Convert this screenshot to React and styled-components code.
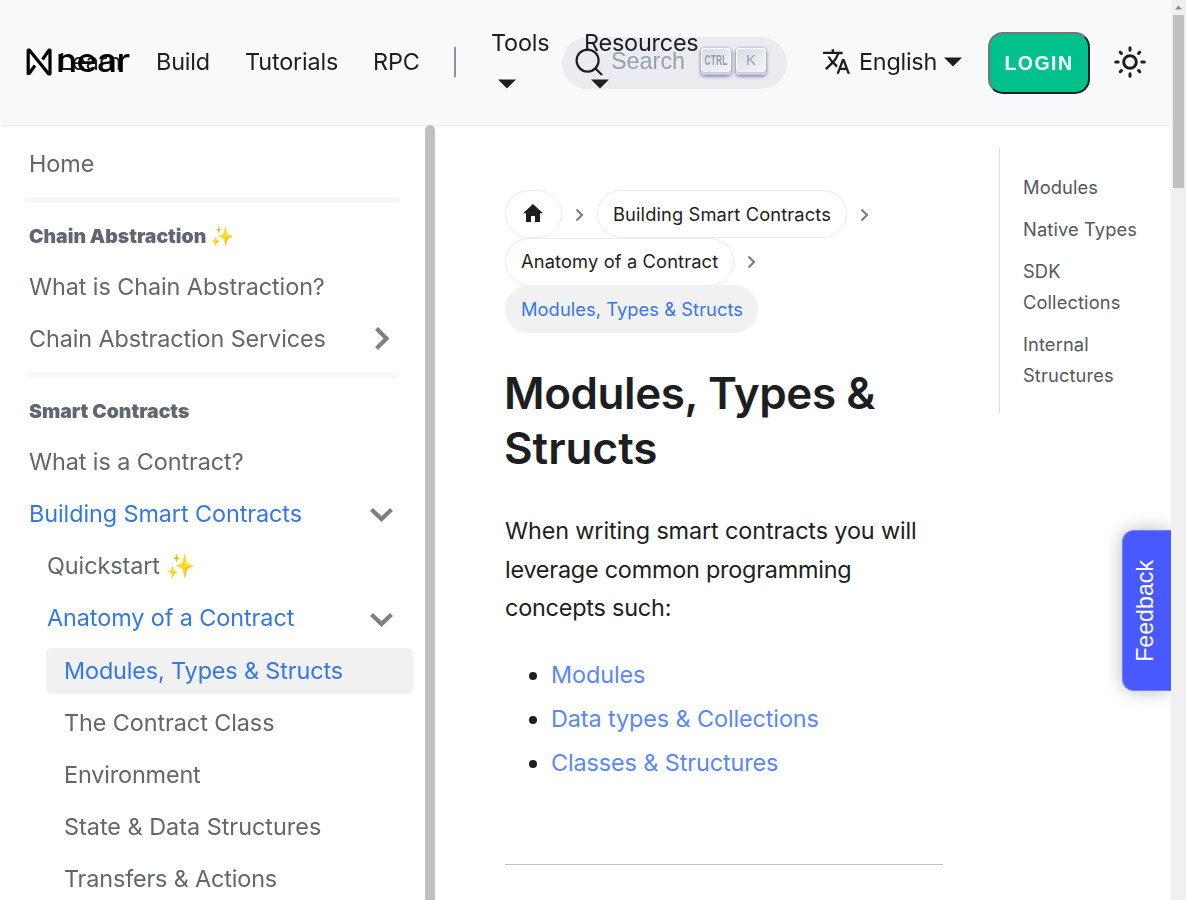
import React from "react";
import styled, { createGlobalStyle } from "styled-components";

const Global = createGlobalStyle`
  *, *::before, *::after { box-sizing: border-box; }
  html, body { margin: 0; height: 100%; overflow: hidden; }
  body { background: #fff; color: #1c1e21; font-family: Inter, "Liberation Sans", sans-serif; font-size: 23.4px; text-rendering: optimizeLegibility; }
`;

const Page = styled.div`display: grid; grid-template-columns: 1171px 15px; height: 900px; width: 1186px; overflow: hidden;`;
const Main = styled.div`display: flex; flex-direction: column; height: 900px; position: relative; overflow: hidden;`;
const Header = styled.header`
  flex: none; height: 125px; padding: 0 24px 2px 26px; background: #f8f9fb; box-shadow: 0 1px 2px rgba(0, 0, 0, 0.1);
  display: flex; align-items: center; position: relative; will-change: transform; z-index: 2;
`;
const Brand = styled.div`width: 33px; flex: none; position: relative; display: flex; z-index: 1; svg { display: block; }`;
const Wordmark = styled.span`
  position: absolute; left: 30px; top: -8px; font-size: 33px; line-height: 40px; font-weight: 500; color: #000;
  transform-origin: 0 50%; transform: scaleX(1.07); letter-spacing: -0.6px;
`;
const NavItem = styled.a`flex: none; width: ${p => p.$w}px; white-space: nowrap; line-height: 38px; letter-spacing: -0.15px;`;
const Divider = styled.span`width: 2px; height: 30px; background: #8f9194; flex: none; margin-right: 35px;`;
const Dropdown = styled.div`
  flex: none; width: ${p => p.$w}px; white-space: nowrap; line-height: 38px; height: 76px; position: relative; z-index: 1; letter-spacing: -0.2px;
  svg { display: block; margin: 17px 0 0 7px; }
`;
const Search = styled.div`
  flex: none; width: 225px; height: 52px; margin: 3px 36px 0 -37px; border-radius: 26px; background: #ebecf0;
  display: flex; align-items: center; padding: 0 21px 3px 13px; color: #969faf; font-family: "Liberation Sans", sans-serif;
  svg { display: block; }
`;
const SearchLabel = styled.span`margin-left: 8px; font-size: 23.4px; flex: 1; `;
const Key = styled.kbd`
  width: 30px; height: 27px; margin-left: 5px; border-radius: 4px; display: flex; align-items: center; justify-content: center;
  background: linear-gradient(-26.5deg, #f8f8f8, #d5dbe4); padding-bottom: 4px; font: 15px "Liberation Sans", sans-serif;
  box-shadow: inset 0 -3px 0 0 #cdcde6, inset 0 0 1px 1px #fff, 0 1px 3px 1px rgba(30, 35, 90, 0.45);
  span { display: block; font-size: 15px; font-weight: 700; transform: scaleX(0.57); }
`;
const Language = styled.div`display: flex; align-items: center; flex: none; width: 165px; span { margin: 0 7.5px 0 9px; line-height: 38px; letter-spacing: -0.25px; }`;
const Login = styled.button`
  width: 102px; height: 62px; flex: none; margin: 3px 23.5px 0 0; padding: 0; border: 2px solid; border-color: #767676 #1c1e21 #1c1e21 #767676;
  border-radius: 15px; background: #00c08b; color: #fff; font: 700 19.5px "Liberation Sans", sans-serif; letter-spacing: 1.5px;
`;
const Body = styled.div`display: flex; flex: 1; min-height: 0;`;
const Sidebar = styled.aside`
  width: 435px; flex: none; color: #606770; will-change: transform; display: flex; justify-content: space-between; position: relative; z-index: 3;
`;
const Menu = styled.nav`width: 425px; padding: 16px 12px 0 26px;`;
const indents = [[0, 3], [18, 3], [20, 18]];
const MenuItem = styled.a`
  display: flex; align-items: center; justify-content: space-between; height: 46px; margin: 0 0 6.2px ${p => indents[p.$level || 0][0]}px;
  padding: 0 20px 1px ${p => indents[p.$level || 0][1]}px; white-space: nowrap; border-radius: 6px; letter-spacing: ${p => p.$ls ?? -0.08}px;
  color: ${p => (p.$on ? "#3578e5" : "#606770")}; background: ${p => (p.$active ? "#f1f1f1" : "transparent")};
  svg { flex: none; }
`;
const Rule = styled.div`height: 6px; width: 373px; background: #f7f7f7; margin: 9.8px 0 10px;`;
const Caption = styled.div`height: 46px; line-height: 46px; padding-left: 3px; margin-bottom: 5px; font-size: 19.4px; font-weight: 900; white-space: nowrap;`;
const SideScroll = styled.div`width: 10px; border-radius: 5px 5px 0 0; background: #c0c0c0;`;
const Article = styled.main`width: 438px; margin-left: 70px; padding-top: 65px; flex: none;`;
const Crumbs = styled.div`display: flex; flex-wrap: wrap; align-items: center; height: 143px; margin-bottom: 33px; font-size: 18.3px;`;
const Crumb = styled.span`
  height: 48px; margin-bottom: -0.5px; padding: 0 15px 1px; border-radius: 24px; border: 1px solid #ececee; display: flex; align-items: center; white-space: nowrap; letter-spacing: 0.13px;
  ${p => p.$active && "background: #f1f1f1; border-color: #f1f1f1; color: #3578e5; letter-spacing: 0.07px; padding-right: 14px;"}
`;
const CrumbArrow = styled.svg`margin: 2px 13px 0; display: block;`;
const Title = styled.h1`margin: 0 0 36px -1px; font-size: 44px; font-weight: 600; line-height: 55px;`;
const Text = styled.p`margin: 0 0 28.4px; line-height: 38.6px; white-space: nowrap;`;
const Line = styled.span`display: block; letter-spacing: ${p => p.$ls || 0}px;`;
const List = styled.ul`margin: 0; padding-left: 46px; line-height: 38.6px; color: #1c1e21;`;
const Bullet = styled.li`margin-bottom: 5.4px; a { color: #5b87f7; letter-spacing: -0.1px; }`;
const End = styled.hr`border: 0; height: 1px; background: #bfc1c6; margin: 81.6px 0 0;`;
const Toc = styled.nav`
  margin: 23px 0 0 56px; width: 160px; height: 265px; border-left: 1px solid #dadde1; padding: 24px 0 0 23px; color: #525860; font-size: 18.3px; line-height: 31px;
  a { display: block; margin-bottom: 11px; letter-spacing: 0.12px; }
`;
const Feedback = styled.div`
  position: absolute; right: 0; top: 530px; width: 49.5px; height: 161px; z-index: 3; border-radius: 12px 0 0 12px; background: #485aff; color: #fff;
  border: 1px solid #7480f0; border-right: 0; box-shadow: 0 0 18px rgba(0,0,0,.28); display: flex; align-items: center; justify-content: center; font: 23.2px "Liberation Sans", sans-serif;
  span { writing-mode: vertical-rl; transform: rotate(180deg); margin-right: 2px; }
`;
const Scrollbar = styled.div`background: #f0f0f0; display: flex; flex-direction: column; align-items: center;`;
const Thumb = styled.div`width: 11px; height: 173px; background: #c0c0c0;`;

const Caret = () => <svg width="18" height="10" viewBox="0 0 18 10"><path d="M0 0.5H18L9 9.5Z" fill="#1c1e21" /></svg>;
const Chevron = ({ down }) => (
  <svg width="24" height="24" viewBox="0 0 24 24" fill="none" stroke="#808080" strokeWidth="4.2">
    {down ? <path d="M2.5 8.5L12.5 18L22.5 8.5" /> : <path d="M7.5 2.5L17.5 12.5L7.5 22.5" />}
  </svg>
);
const Arrow = () => <CrumbArrow width="9" height="14" viewBox="0 0 9 14" fill="none" stroke="#808080" strokeWidth="2.2"><path d="M1.5 1.5L7 7L1.5 12.5" /></CrumbArrow>;

const entries = [
  { text: "What is a Contract?" },
  { text: "Building Smart Contracts", open: true },
  { text: "Quickstart ✨", level: 1 },
  { text: "Anatomy of a Contract", level: 1, open: true },
  { text: "Modules, Types & Structs", level: 2, active: true, ls: -0.13 },
  { text: "The Contract Class", level: 2 },
  { text: "Environment", level: 2, ls: -0.15 },
  { text: "State & Data Structures", level: 2, ls: 0 },
  { text: "Transfers & Actions", level: 2, ls: -0.15 },
];

export default function App() {
  return (
    <Page>
      <Global />
      <Main>
        <Header>
          <Brand>
            <svg width="26" height="28" viewBox="0 0 26 28" fill="none" stroke="#000" strokeLinejoin="round">
              <path d="M9 17.5L3.2 25.5H2.2V2.2H3.5L22.5 25.8H24V2.2H23L16.5 11.5" strokeWidth="3.2" />
            </svg>
            <Wordmark>near</Wordmark>
          </Brand>
          <NavItem $w={97}>Learn</NavItem>
          <NavItem $w={89}>Build</NavItem>
          <NavItem $w={128}>Tutorials</NavItem>
          <NavItem $w={81}>RPC</NavItem>
          <Divider />
          <Dropdown $w={93}>Tools<Caret /></Dropdown>
          <Dropdown $w={15}>Resources<Caret /></Dropdown>
          <Search>
            <svg width="28" height="28" viewBox="0 0 28 28" fill="none" stroke="#1c1e21" strokeWidth="2.2"><circle cx="12.6" cy="12.6" r="11" /><path d="M20 20L27 27" /></svg>
            <SearchLabel>Search</SearchLabel>
            <Key><span>CTRL</span></Key><Key>K</Key>
          </Search>
          <Language>
            <svg width="27" height="27" viewBox="1 1 22 22" fill="#1c1e21"><path d="M12.87 15.07l-2.54-2.51.03-.03A17.52 17.52 0 0 0 14.07 6H17V4h-7V2H8v2H1v1.99h11.17C11.5 7.92 10.44 9.75 9 11.35 8.07 10.32 7.3 9.19 6.69 8h-2c.73 1.63 1.73 3.17 2.98 4.56l-5.09 5.02L4 19l5-5 3.11 3.11.76-2.04zM18.5 10h-2L12 22h2l1.12-3h4.75L21 22h2l-4.5-12zm-2.62 7l1.62-4.33L19.12 17h-3.24z" /></svg>
            <span>English</span><Caret />
          </Language>
          <Login>LOGIN</Login>
          <svg width="32" height="32" viewBox="0 0 32 32" fill="none" stroke="#1c1e21" strokeWidth="3" strokeLinecap="round">
            <circle cx="16" cy="16" r="6.3" />
            <path d="M16 1.7V4.2M16 27.8V30.3M1.7 16H4.2M27.8 16H30.3M6.2 6.2L7.4 7.4M24.6 24.6L25.8 25.8M6.2 25.8L7.4 24.6M24.6 7.4L25.8 6.2" />
          </svg>
        </Header>
        <Body>
          <Sidebar>
            <Menu>
              <MenuItem>Home</MenuItem>
              <Rule />
              <Caption>Chain Abstraction ✨</Caption>
              <MenuItem>What is Chain Abstraction?</MenuItem>
              <MenuItem $ls={-0.11}>Chain Abstraction Services<Chevron /></MenuItem>
              <Rule />
              <Caption>Smart Contracts</Caption>
              {entries.map(({ text, level, open, active, ls }) => (
                <MenuItem key={text} $level={level} $on={open || active} $active={active} $ls={ls}>{text}{open && <Chevron down />}</MenuItem>
              ))}
            </Menu>
            <SideScroll />
          </Sidebar>
          <Article>
            <Crumbs>
              <Crumb><svg width="25" height="22" viewBox="0 0 25 22" fill="#1c1e21"><path d="M12 1L22 10.2H19V19H14V13H10V19H5V10.2H2Z" /></svg></Crumb><Arrow />
              <Crumb>Building Smart Contracts</Crumb><Arrow />
              <Crumb>Anatomy of a Contract</Crumb><Arrow />
              <Crumb $active>Modules, Types & Structs</Crumb>
            </Crumbs>
            <Title><Line $ls={-0.42}>Modules, Types &</Line><Line>Structs</Line></Title>
            <Text>
              <Line $ls={-0.12}>When writing smart contracts you will</Line>
              <Line $ls={-0.22}>leverage common programming</Line>
              <Line $ls={-0.2}>concepts such:</Line>
            </Text>
            <List>
              <Bullet><a>Modules</a></Bullet><Bullet><a>Data types & Collections</a></Bullet><Bullet><a>Classes & Structures</a></Bullet>
            </List>
            <End />
          </Article>
          <Toc><a>Modules</a><a>Native Types</a><a>SDK<br />Collections</a><a>Internal<br />Structures</a></Toc>
        </Body>
        <Feedback><span>Feedback</span></Feedback>
      </Main>
      <Scrollbar>
        <svg width="15" height="15" viewBox="0 0 15 15"><path d="M4 9.5L7.5 5.5L11 9.5Z" fill="#8b8b8b" /></svg>
        <Thumb />
      </Scrollbar>
    </Page>
  );
}
